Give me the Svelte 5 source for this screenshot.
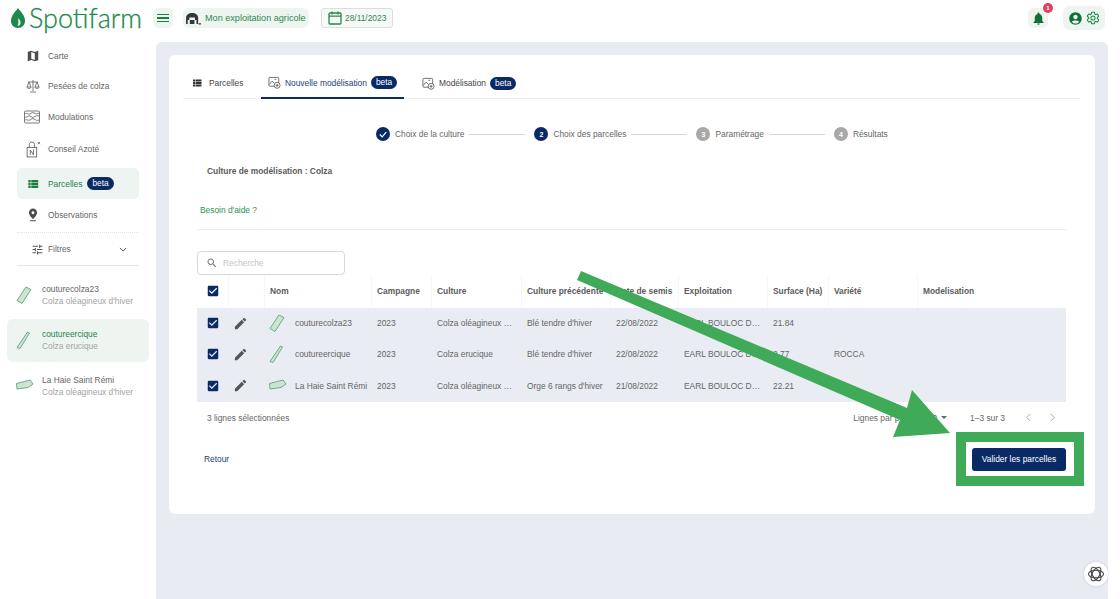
<script>
  const P = {
    map: 'M20.5 3l-.16.03L15 5.1 9 3 3.36 4.9c-.21.07-.36.25-.36.48V20.5c0 .28.22.5.5.5l.16-.03L9 18.9l6 2.1 5.64-1.9c.21-.07.36-.25.36-.48V3.5c0-.28-.22-.5-.5-.5zM15 19l-6-2.11V5l6 2.11V19z',
    list: 'M4 14h4v-4H4v4zm0 5h4v-4H4v4zM4 9h4V5H4v4zm5 5h12v-4H9v4zm0 5h12v-4H9v4zM9 5v4h12V5H9z',
    place: 'M12 1C8.13 1 5 4.13 5 8c0 4.5 7 11 7 11s7-6.5 7-11c0-3.87-3.13-7-7-7zm0 9.5c-1.38 0-2.5-1.12-2.5-2.5s1.12-2.5 2.5-2.5 2.5 1.12 2.5 2.5-1.12 2.5-2.5 2.5zM7 21h10v1.6H7z',
    tune: 'M3 17v2h6v-2H3zM3 5v2h10V5H3zm10 16v-2h8v-2h-8v-2h-2v6h2zM7 9v2H3v2h4v2h2V9H7zm14 4v-2H11v2h10zm-6-4h2V7h4V5h-4V3h-2v6z',
    edit: 'M3 17.25V21h3.75L17.81 9.94l-3.75-3.75L3 17.25zM20.71 7.04c.39-.39.39-1.02 0-1.41l-2.34-2.34a.9959.9959 0 0 0-1.41 0l-1.83 1.83 3.75 3.75 1.83-1.83z',
    check: 'M19 3H5c-1.1 0-2 .9-2 2v14c0 1.1.9 2 2 2h14c1.1 0 2-.9 2-2V5c0-1.1-.9-2-2-2zm-9 14-5-5 1.41-1.41L10 14.17l7.59-7.59L19 8l-9 9z',
    search: 'M15.5 14h-.79l-.28-.27C15.41 12.59 16 11.11 16 9.5 16 5.91 13.09 3 9.5 3S3 5.91 3 9.5 5.91 16 9.5 16c1.61 0 3.09-.59 4.23-1.57l.27.28v.79l5 4.99L20.49 19l-4.99-5zm-6 0C7.01 14 5 11.99 5 9.5S7.01 5 9.5 5 14 7.01 14 9.5 11.99 14 9.5 14z',
    bell: 'M12 22c1.1 0 2-.9 2-2h-4c0 1.1.9 2 2 2zm6-6v-5c0-3.07-1.63-5.64-4.5-6.32V4c0-.83-.67-1.5-1.5-1.5s-1.5.67-1.5 1.5v.68C7.64 5.36 6 7.92 6 11v5l-2 2v1h16v-1l-2-2z',
    account: 'M12 2C6.48 2 2 6.48 2 12s4.48 10 10 10 10-4.48 10-10S17.52 2 12 2zm0 4c1.93 0 3.5 1.57 3.5 3.5S13.93 13 12 13s-3.5-1.57-3.5-3.5S10.07 6 12 6zm0 14c-2.03 0-4.43-.82-6.14-2.88C7.55 15.8 9.68 15 12 15s4.45.8 6.14 2.12C16.43 19.18 14.03 20 12 20z',
    gear: 'M19.43 12.98c.04-.32.07-.64.07-.98s-.03-.66-.07-.98l2.11-1.65c.19-.15.24-.42.12-.64l-2-3.46c-.12-.22-.39-.3-.61-.22l-2.49 1c-.52-.4-1.08-.73-1.69-.98l-.38-2.65C14.46 2.18 14.25 2 14 2h-4c-.25 0-.46.18-.49.42l-.38 2.65c-.61.25-1.17.59-1.69.98l-2.49-1c-.23-.09-.49 0-.61.22l-2 3.46c-.13.22-.07.49.12.64l2.11 1.65c-.04.32-.07.65-.07.98s.03.66.07.98l-2.11 1.65c-.19.15-.24.42-.12.64l2 3.46c.12.22.39.3.61.22l2.49-1c.52.4 1.08.73 1.69.98l.38 2.65c.03.24.24.42.49.42h4c.25 0 .46-.18.49-.42l.38-2.65c.61-.25 1.17-.59 1.69-.98l2.49 1c.23.09.49 0 .61-.22l2-3.46c.12-.22.07-.49-.12-.64l-2.11-1.65zM12 15.5c-1.93 0-3.5-1.57-3.5-3.5s1.57-3.5 3.5-3.5 3.5 1.57 3.5 3.5-1.57 3.5-3.5 3.5z'
  };
  const FIELD = {
    a: '1,14.5 10,1 15,3.5 6,17.5',
    b: '1,16.5 11.5,1 13.5,2 4,17.5',
    c: '0.5,6.5 14,3 17,7 12,10.5 1,12'
  };
  const nav = [
    { id: 'carte', label: 'Carte', icon: 'map' },
    { id: 'pesees', label: 'Pesées de colza', icon: 'scale' },
    { id: 'modul', label: 'Modulations', icon: 'modul' },
    { id: 'conseil', label: 'Conseil Azoté', icon: 'azote' },
    { id: 'parc', label: 'Parcelles', icon: 'list', active: true, beta: true },
    { id: 'obs', label: 'Observations', icon: 'place' }
  ];
  const fields = [
    { name: 'couturecolza23', crop: "Colza oléagineux d'hiver", f: 'a' },
    { name: 'coutureercique', crop: 'Colza erucique', f: 'b', active: true },
    { name: 'La Haie Saint Rémi', crop: "Colza oléagineux d'hiver", f: 'c' }
  ];
  const heads = ['', '', 'Nom', 'Campagne', 'Culture', 'Culture précédente', 'Date de semis', 'Exploitation', 'Surface (Ha)', 'Variété', 'Modelisation'];
  const rows = [
    { nom: 'couturecolza23', f: 'a', cult: 'Colza oléagineux …', prec: "Blé tendre d'hiver", date: '22/08/2022', surf: '21.84', varr: '' },
    { nom: 'coutureercique', f: 'b', cult: 'Colza erucique', prec: "Blé tendre d'hiver", date: '22/08/2022', surf: '2.77', varr: 'ROCCA' },
    { nom: 'La Haie Saint Rémi', f: 'c', cult: 'Colza oléagineux …', prec: "Orge 6 rangs d'hiver", date: '21/08/2022', surf: '22.21', varr: '' }
  ];
  const steps = [
    { n: '', label: 'Choix de la culture', state: 'done' },
    { n: '2', label: 'Choix des parcelles', state: 'cur' },
    { n: '3', label: 'Paramétrage', state: 'todo' },
    { n: '4', label: 'Résultats', state: 'todo' }
  ];
</script>

{#snippet ic(name, cls)}
  <svg class={cls} viewBox="0 0 24 24" aria-hidden="true"><path d={P[name]} /></svg>
{/snippet}

{#snippet field(f, cls)}
  <svg class={cls} viewBox="0 0 18 18" aria-hidden="true"><polygon points={FIELD[f]} /></svg>
{/snippet}

{#snippet modelIcon()}
  <svg class="model" viewBox="0 0 14 14" aria-hidden="true">
    <rect x="1" y="1.5" width="10.5" height="9.5" rx="1" />
    <path d="M1.5 9l3-3.5 2.5 2.5M7 3.5h2" />
    <circle cx="9.8" cy="10" r="3.2" class="fillw" />
    <path d="M9.8 8.400v3.200M8.200 10h3.200" />
  </svg>
{/snippet}

<div class="app">
  <header class="top">
    <div class="logo">
      <svg class="leaf" viewBox="0 0 14 20" aria-hidden="true">
        <path d="M7 0C5 3 0 7 0 13c0 4 3 7 7 7s7-3 7-7C14 7 9 3 7 0z" />
        <path class="leafin" d="M7.500 10c1 2 2.500 3 2 5.500-.3 1.500-1.500 2.500-3 2.500 1.500-2.500.3-5 1-8z" />
      </svg>
      <span>Spotifarm</span>
    </div>
    <button class="menu" aria-label="menu"><i></i><i></i><i></i></button>
    <div class="farm">
      <svg class="barn" viewBox="0 0 16 14" aria-hidden="true">
        <path d="M0 13V6C0 3 3 1 6.500 1S13 3 13 6v7h-1.800V8.500H9.500V6h-6v2.500H1.800V13z" /><path d="M4 8.500h5V13H4zM13.500 12H16v1.500h-2.500z" />
      </svg>
      Mon exploitation agricole
    </div>
    <div class="date">
      <svg class="cal" viewBox="0 0 14 14" aria-hidden="true">
        <rect x="1" y="2" width="12" height="11" rx="1" /><path d="M1 5.200h12M4 .5v3M10 .5v3" />
      </svg>
      28/11/2023
    </div>
    <div class="grow"></div>
    <div class="bell">
      {@render ic('bell', 'i-bell')}
      <span class="badge">1</span>
    </div>
    <div class="acct">
      {@render ic('account', 'i-acct')}
      {@render ic('gear', 'i-gear')}
    </div>
  </header>

  <div class="body">
    <aside class="side">
      <nav class="nav">
        {#each nav as n}
          <div class="nitem {n.id}" class:on={n.active}>
            <span class="nicon">
              {#if n.icon === 'scale'}
                <svg class="cust" viewBox="0 0 14 14" aria-hidden="true"><path d="M7 1v11M2 3h10M4 13h6M3 3L1 8h4zM11 3L9 8h4zM1 8c0 2 4 2 4 0M9 8c0 2 4 2 4 0" /></svg>
              {:else if n.icon === 'modul'}
                <svg class="cust wide" viewBox="0 0 16 14" aria-hidden="true"><rect x=".5" y="1" width="15" height="12" rx="1" /><path d="M1 4c2-2 3 1 5 0s2-2 4-1 3 1 5 0M1 7c2 1 3-2 5-1s2 2 4 1 3-2 5-1M1 10c2-1 3 1 5 0s2-2 4-1 3 2 5 1" /></svg>
              {:else if n.icon === 'azote'}
                <svg class="cust tall" viewBox="0 0 14 16" aria-hidden="true"><rect x="1" y="6" width="9" height="9" /><path d="M3 6V3.500C3 2 4 1 5.500 1S8 2 8 3.500V6M4 13V8.500l3 4.500V8M11 1l2 2M13 1l-2 2" /></svg>
              {:else}
                {@render ic(n.icon, 'i-nav')}
              {/if}
            </span>
            <span>{n.label}</span>
            {#if n.beta}<span class="beta">beta</span>{/if}
          </div>
        {/each}
      </nav>
      <div class="filters">
        {@render ic('tune', 'i-tune')}
        <span>Filtres</span>
        <svg class="chev" viewBox="0 0 10 6" aria-hidden="true"><path d="M1 1l4 4 4-4" /></svg>
      </div>
      <div class="flist">
        {#each fields as f}
          <div class="fitem" class:on={f.active}>
            {@render field(f.f, 'fld big')}
            <div class="ftxt">
              <div class="fname">{f.name}</div>
              <div class="fcrop">{f.crop}</div>
            </div>
          </div>
        {/each}
      </div>
    </aside>

    <main class="main">
      <section class="card">
        <div class="tabs">
          <div class="tab t1">{@render ic('list', 'i-tab')}Parcelles</div>
          <div class="tab t2 active">{@render modelIcon()}Nouvelle modélisation<span class="beta">beta</span></div>
          <div class="tab t3">{@render modelIcon()}Modélisation<span class="beta">beta</span></div>
        </div>

        <div class="stepper">
          {#each steps as s, i}
            {#if i > 0}<span class="line"></span>{/if}
            <span class="dot {s.state}">
              {#if s.state === 'done'}
                <svg class="tick" viewBox="0 0 10 8" aria-hidden="true"><path d="M1 4l3 3 5-6" /></svg>
              {:else}{s.n}{/if}
            </span>
            <span class="slabel">{s.label}</span>
          {/each}
        </div>

        <div class="cultitle">Culture de modélisation : Colza</div>
        <div class="help">Besoin d'aide ?</div>
        <div class="rule"></div>

        <div class="sbox">
          {@render ic('search', 'i-search')}
          <span>Recherche</span>
        </div>

        <div class="table">
          <div class="tr head">
            {#each heads as h, i}
              <div class="td">
                {#if i === 0}{@render ic('check', 'i-check')}{:else}{h}{/if}
              </div>
            {/each}
          </div>
          {#each rows as r}
            <div class="tr row">
              <div class="td">{@render ic('check', 'i-check')}</div>
              <div class="td">{@render ic('edit', 'i-edit')}</div>
              <div class="td nom">{@render field(r.f, 'fld')}<span>{r.nom}</span></div>
              <div class="td">2023</div>
              <div class="td">{r.cult}</div>
              <div class="td">{r.prec}</div>
              <div class="td">{r.date}</div>
              <div class="td">EARL BOULOC D…</div>
              <div class="td">{r.surf}</div>
              <div class="td">{r.varr}</div>
              <div class="td"></div>
            </div>
          {/each}
        </div>

        <div class="foot">
          <span class="sel">3 lignes sélectionnées</span>
          <div class="pager">
            <span>Lignes par page:</span>
            <span class="pp">10 <b></b></span>
            <span class="range">1–3 sur 3</span>
            <svg class="pchev" viewBox="0 0 8 10" aria-hidden="true"><path d="M6 1L2 5l4 4" /></svg>
            <svg class="pchev" viewBox="0 0 8 10" aria-hidden="true"><path d="M2 1l4 4-4 4" /></svg>
          </div>
        </div>

        <div class="actions">
          <span class="back">Retour</span>
          <button class="go">Valider les parcelles</button>
        </div>
      </section>
    </main>
  </div>

  <div class="hl"></div>
  <svg class="arrow" viewBox="0 0 1120 599" aria-hidden="true">
    <polygon points="581,271 907,408 912,390 950,433 893,437 900,420 577,280" />
  </svg>
  <div class="gpt">
    <svg viewBox="0 0 24 24" aria-hidden="true">
      <g>
        <ellipse cx="12" cy="12" rx="10" ry="5" />
        <ellipse cx="12" cy="12" rx="10" ry="5" transform="rotate(60 12 12)" />
        <ellipse cx="12" cy="12" rx="10" ry="5" transform="rotate(120 12 12)" />
      </g>
    </svg>
  </div>
</div>

<style>
  :global(body) { margin: 0; background: #fff; }
  .app {
    position: relative; width: 1120px; height: 599px; overflow: hidden;
    display: flex; flex-direction: column; background: #fff;
    font: 8.4px "Liberation Sans", Arial, sans-serif; color: #666;
  }
  svg { display: block; flex: none; }
  button { font: inherit; border: 0; padding: 0; }

  /* header */
  .top { height: 42px; flex: none; display: flex; align-items: center; padding: 0 15px 6px 11px; box-sizing: border-box; }
  .logo { display: flex; align-items: center; width: 142px; color: #1d8a4c; flex: none; overflow: visible; }
  .logo span { font: 300 27px/1 Lato, sans-serif; -webkit-text-stroke: .3px #1d8a4c; margin-left: 4px; margin-top: -1px; }
  .leaf { width: 14px; height: 20px; fill: #1d8a4c; }
  .leafin { fill: #e6f3ea; }
  .menu { width: 20px; height: 20px; flex: none; background: #eef5f1; border-radius: 5px; display: flex; flex-direction: column; gap: 2.500px; align-items: center; justify-content: center; }
  .menu i { display: block; width: 12px; height: 1.200px; background: #1d7f47; }
  .farm { margin-left: 10px; width: 126px; height: 20px; box-sizing: border-box; background: #eef5f1; border-radius: 6px; display: flex; align-items: center; padding-left: 3px; gap: 4px; color: #2a8a52; font-size: 9.100px; }
  .barn { width: 15px; height: 13px; fill: #33363a; }
  .date { margin-left: 12px; width: 72px; height: 20px; box-sizing: border-box; border: 1px solid #ddd; border-radius: 3px; background: #f7f8f8; display: flex; align-items: center; padding-left: 6px; gap: 3px; color: #2a8a52; }
  .cal { width: 14px; height: 14px; fill: none; stroke: #1d8a4c; stroke-width: 1.300; }
  .grow { flex: 1; }
  .bell { position: relative; width: 20px; height: 20px; background: #eef5f1; border-radius: 5px; display: flex; align-items: center; justify-content: center; margin-right: 15px; }
  .i-bell { width: 15px; height: 15px; fill: #10703a; }
  .badge { position: absolute; top: -5px; right: -5px; width: 10px; height: 10px; border-radius: 50%; background: #d9445f; color: #fff; font-size: 6px; font-weight: 700; line-height: 10px; text-align: center; }
  .acct { width: 42px; height: 24px; background: #eef5f1; border-radius: 6px; display: flex; align-items: center; justify-content: center; gap: 3px; }
  .i-acct { width: 15px; height: 15px; fill: #10703a; }
  .i-gear { width: 14px; height: 14px; fill: none; stroke: #1d8a4c; stroke-width: 1.800; }

  .body { flex: 1; min-height: 0; display: flex; }

  /* sidebar */
  .side { width: 156px; flex: none; display: flex; flex-direction: column; margin-top: -1px; }
  .nav { margin: 0 17px; display: flex; flex-direction: column; border-bottom: 1px dotted #e2e2e2; height: 191px; }
  .nitem { height: 30px; display: flex; align-items: center; flex: none; padding-left: 9px; }
  .nitem.modul { margin-top: 1px; }
  .nitem.conseil { height: 32px; margin-top: 1px; }
  .nitem.parc { height: 31px; margin-top: 3px; }
  .nitem.obs { height: 32px; }
  .nitem.on { background: #eef5f1; border-radius: 5px; color: #24834c; }
  .nicon { width: 22px; display: flex; }
  .i-nav { width: 14px; height: 14px; fill: #4e4e4e; }
  .on .i-nav { fill: #1d7f47; }
  .cust { width: 14px; height: 14px; fill: none; stroke: #5b5b5b; stroke-width: .8; }
  .wide { width: 16px; margin-left: -2px; }
  .tall { width: 15px; height: 17px; }
  .beta { display: inline-block; height: 13px; line-height: 13px; padding: 0 5px; border-radius: 7px; background: #0a2a66; color: #fff; margin-left: 5px; font-size: 8.400px; }
  .filters { height: 33px; margin: 0 17px; box-sizing: border-box; border-bottom: 1px solid #e6e6e6; display: flex; align-items: center; padding-left: 14px; }
  .i-tune { width: 13px; height: 13px; fill: #555; margin-right: 4px; }
  .chev { width: 8px; height: 5px; margin-left: auto; margin-right: 12px; fill: none; stroke: #555; stroke-width: 1.200; }
  .flist { margin-top: 7px; display: flex; flex-direction: column; gap: 2.500px; padding: 0 7px; }
  .fitem { height: 43px; display: flex; align-items: center; border-radius: 6px; padding-left: 9px; gap: 8px; }
  .fitem.on { background: #eef5f1; }
  .fname { color: #666; line-height: 12px; }
  .fcrop { color: #a3a3a3; line-height: 12px; }
  .on .fname { color: #24834c; }
  .fld { width: 18px; height: 18px; fill: #cfe3d5; stroke: #5aa878; stroke-width: .9; }

  /* main */
  .main { flex: 1; margin-right: 12px; padding: 13px; background: #e9ebf3; border-radius: 6px 6px 0 0; box-sizing: border-box; min-width: 0; }
  .card { height: 459px; background: #fff; border-radius: 6px; box-sizing: border-box; padding: 15px 14px 0 14px; display: flex; flex-direction: column; }

  .tabs { height: 29px; flex: none; display: flex; border-bottom: 1px solid #eceef0; box-sizing: border-box; }
  .tab { display: flex; align-items: center; color: #444; padding-bottom: 2px; box-sizing: border-box; height: 28px; white-space: nowrap; flex: none; }
  .t1 { width: 78px; padding-left: 8px; gap: 6px; }
  .t2 { width: 143px; padding-left: 7px; gap: 4px; color: #1d3f7c; height: 29px; border-bottom: 2px solid #0a2a66; }
  .t2 .beta, .t3 .beta { margin-left: 0; }
  .t3 { margin-left: 18px; gap: 4px; }
  .i-tab { width: 12px; height: 12px; fill: #333; }
  .model { width: 13px; height: 13px; fill: none; stroke: #444; stroke-width: .8; }
  .fillw { fill: #fff; }

  .stepper { margin-top: 28px; height: 14px; display: flex; align-items: center; padding-left: 193px; flex: none; }
  .dot { width: 14px; height: 14px; border-radius: 50%; background: #a8a8a8; color: #fff; display: flex; align-items: center; justify-content: center; font-size: 7px; margin-right: 5px; font-weight: 700; flex: none; }
  .dot.done, .dot.cur { background: #0a2a66; }
  .tick { width: 8px; height: 7px; fill: none; stroke: #fff; stroke-width: 1.500; }
  .line { width: 56px; height: 1px; background: #d6d6d6; margin: 0 9px 0 5px; flex: none; }
  .slabel { white-space: nowrap; }

  .cultitle { margin: 24px 0 0 24px; line-height: 12px; font-weight: 700; color: #5c5c5c; }
  .help { margin: 27px 0 0 17px; line-height: 12px; color: #2a9155; }
  .rule { margin: 13px 14px 0; height: 1px; background: #eeeeee; flex: none; }

  .sbox { margin: 21px 0 0 14px; width: 148px; height: 24px; box-sizing: border-box; border: 1px solid #d8d8d8; border-radius: 4px; display: flex; align-items: center; padding-left: 8px; gap: 5px; color: #c4c4c4; flex: none; }
  .i-search { width: 12px; height: 12px; fill: #777; }

  .table { margin: 0 15px 0 14px; display: flex; flex-direction: column; }
  .tr { display: grid; grid-template-columns: 31px 36px 107px 60px 90px 89px 68px 89px 61px 89px 150px; }
  .td { display: flex; align-items: center; padding: 0 0 1px 6px; box-sizing: border-box; white-space: nowrap; overflow: hidden; }
  .head { height: 33px; }
  .head .td { font-weight: 700; color: #5c5c5c; border-left: 1px dotted #f0f0f0; padding-left: 5px; }
  .head .td:first-child { border-left: 0; padding-left: 9px; }
  .row { height: 31.330px; background: #e9ecf3; }
  .row .td:first-child { padding-left: 9px; }
  .i-check { width: 14px; height: 14px; fill: #0a2a66; }
  .i-edit { width: 15px; height: 15px; fill: #555; margin-left: -1px; }
  .nom { gap: 8px; padding-left: 5px; }

  .foot { margin: 0 15px 0 24px; height: 32px; display: flex; align-items: center; justify-content: space-between; flex: none; }
  .pager { display: flex; align-items: center; }
  .pp { margin-left: 12px; display: flex; align-items: center; gap: 4px; }
  .pp b { width: 0; height: 0; border: 3px solid transparent; border-top: 3.500px solid #666; border-bottom: 0; }
  .range { margin-left: 23px; margin-right: 20px; }
  .pchev { width: 7px; height: 9px; fill: none; stroke: #9a9a9a; stroke-width: 1; margin-right: 17px; }
  .pchev:last-child { margin-right: 10px; }

  .actions { margin: 14px 15px 0 21px; display: flex; justify-content: space-between; align-items: center; flex: none; }
  .back { color: #1d3f7c; padding-bottom: 1px; }
  .go { width: 94px; height: 23px; background: #0a2a66; color: #fff; border-radius: 3px; }

  /* annotation overlays */
  .hl { position: absolute; left: 956px; top: 432px; width: 128px; height: 54px; box-sizing: border-box; border: 10px solid #3faa58; }
  .arrow { position: absolute; inset: 0; width: 1120px; height: 599px; fill: #3faa58; pointer-events: none; }
  .gpt { position: absolute; left: 1084px; top: 562px; width: 24px; height: 24px; border-radius: 50%; background: #fff; display: flex; align-items: center; justify-content: center; box-shadow: 0 0 3px rgba(0,0,0,.15); }
  .gpt svg { width: 18px; height: 18px; fill: none; stroke: #4a4a4a; stroke-width: 1.500; }
</style>
